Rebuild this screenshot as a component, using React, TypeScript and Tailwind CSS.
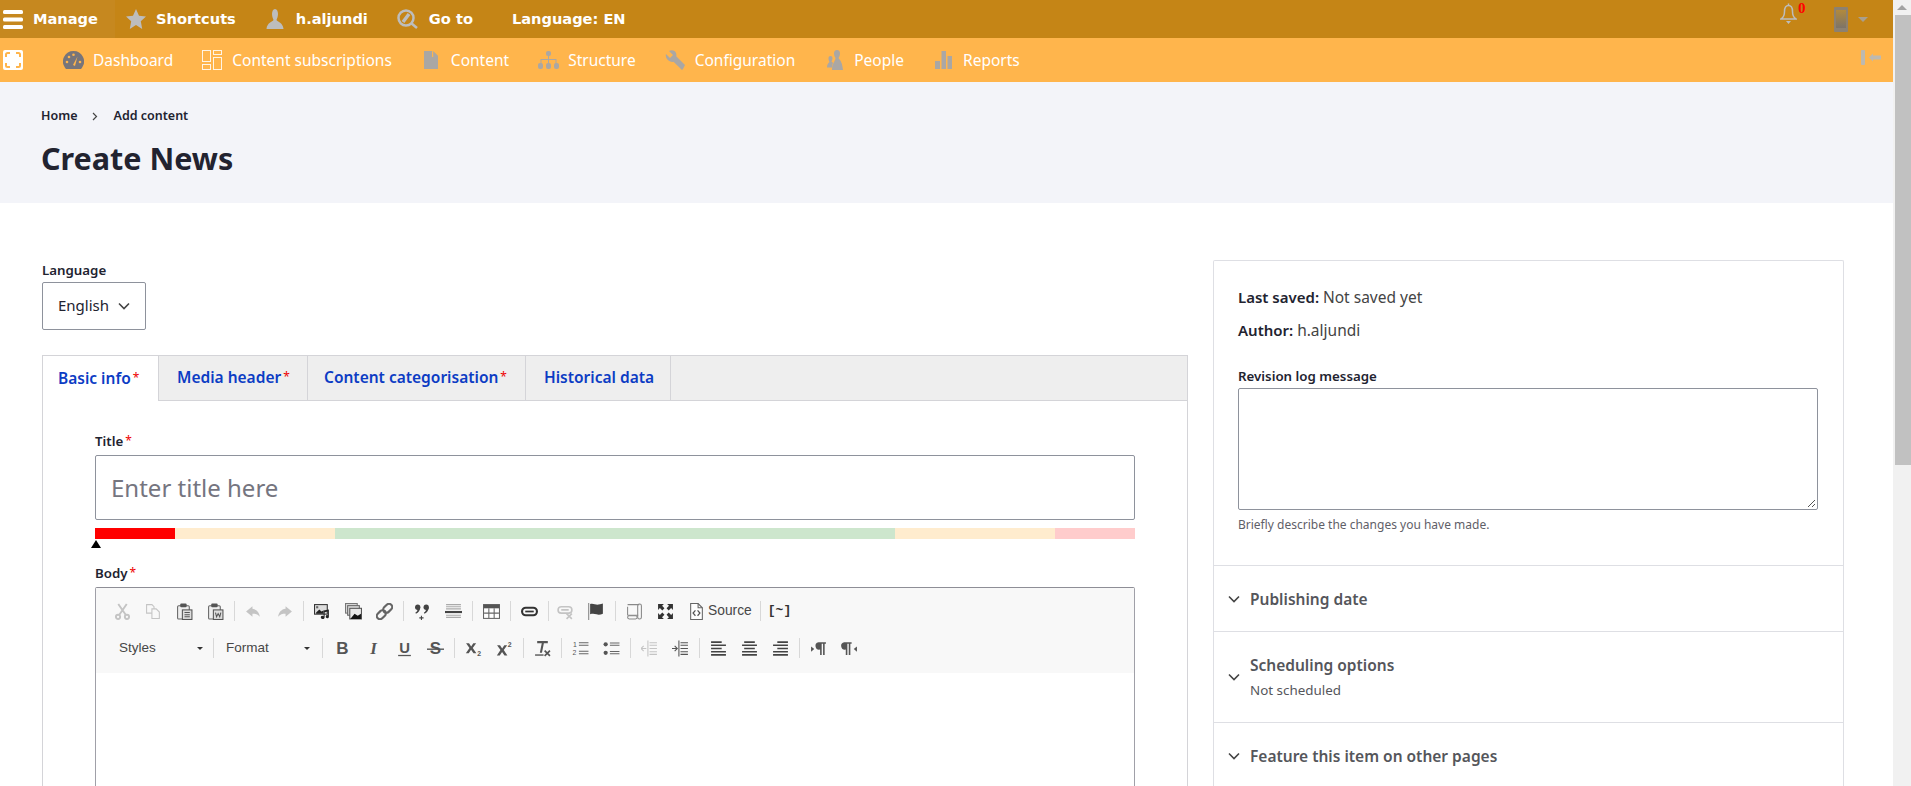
import React from 'react';

const gray = '#555';
const light = '#c4c4c4';

// CKEditor toolbar icons, hand drawn on a 16 box
const icons: Record<string, React.ReactNode> = {
  cut: (
    <g stroke={light} fill="none" strokeWidth="1.8">
      <path d="M4 1l7 10M12 1L5 11" />
      <circle cx="3.8" cy="13" r="2" />
      <circle cx="12.2" cy="13" r="2" />
    </g>
  ),
  copy: (
    <g stroke={light} fill="#f8f8f8" strokeWidth="1">
      <path d="M1.5 1.5h5l2 2v6h-7z" />
      <path d="M6.5 5.5h4l3 3v6h-7z" />
    </g>
  ),
  paste: (
    <g>
      <rect x="1.5" y="2.5" width="11" height="12.5" rx="1" fill="#eee" stroke="#666" />
      <rect x="4" y="0.5" width="6" height="3.5" rx="1" fill="#555" />
      <rect x="6" y="6.5" width="9" height="9" fill="#ddd" stroke="#555" />
      <path d="M8 9h5M8 11h5M8 13h5" stroke="#555" />
    </g>
  ),
  word: (
    <g>
      <rect x="1.5" y="2.5" width="11" height="12.5" rx="1" fill="#eee" stroke="#666" />
      <rect x="4" y="0.5" width="6" height="3.5" rx="1" fill="#555" />
      <rect x="6" y="6.5" width="9" height="9" fill="#ddd" stroke="#555" />
      <path d="M8 9l1 4 1.500-3 1.500 3 1-4" stroke="#555" fill="none" />
    </g>
  ),
  undo: <path d="M7 3L1 8l6 5v-3c3 0 5 .5 7 3-.5-4-3-7-7-7.500z" fill={light} />,
  redo: <path d="M9 3l6 5-6 5v-3c-3 0-5 .5-7 3 .5-4 3-7 7-7.500z" fill={light} />,
  image: (
    <g>
      <rect x="0.500" y="1.500" width="12" height="9" fill="#ddd" stroke="#333" />
      <path d="M2 9l3-3 2 2 2-1v3H2z" fill="#222" />
      <rect x="2" y="3" width="2" height="2" fill="#666" />
      <path d="M8 15a1.500 1.500 0 1 1 1-2.500V7l5-1v7a1.500 1.500 0 1 1-1-1.500V8l-3 .7V13.500A1.500 1.500 0 0 1 8 15z" fill="#222" />
    </g>
  ),
  gallery: (
    <g>
      <rect x="0.500" y="0.500" width="11" height="9" fill="#ddd" stroke="#777" />
      <rect x="2.500" y="2.500" width="11" height="9" fill="#ddd" stroke="#666" />
      <rect x="4.500" y="5" width="11" height="10" fill="#e8e8e8" stroke="#555" />
      <path d="M5 15l4-5 3 2 3-2v5z" fill="#111" />
    </g>
  ),
  chain: (
    <g fill="none" stroke="#666" strokeWidth="2" transform="rotate(-45 8 8)">
      <rect x="-1" y="5" width="9.500" height="6" rx="3" />
      <rect x="7.500" y="5" width="9.500" height="6" rx="3" />
    </g>
  ),
  quote: (
    <g fill="#444">
      <circle cx="3.500" cy="4" r="2.500" />
      <path d="M5.800 4c0 3-1.500 5-4 6l-.5-1c1.500-1 2-2 2-3z" />
      <circle cx="11.500" cy="4" r="2.500" />
      <path d="M13.800 4c0 3-1.500 5-4 6l-.5-1c1.500-1 2-2 2-3z" />
      <path d="M6.500 12h1v1.500h1.500v1H7.500V16h-1v-1.500H5v-1h1.500z" />
    </g>
  ),
  hr: (
    <g>
      <path d="M1 1.500h14M1 3.500h14M1 5.500h14M1 11.500h14M1 13.500h14" stroke="#aaa" />
      <rect x="0" y="7.500" width="16" height="2" fill="#444" />
    </g>
  ),
  table: (
    <g>
      <rect x="0.500" y="1.500" width="15" height="13" fill="#fff" stroke="#666" />
      <rect x="0.500" y="1.500" width="15" height="3.500" fill="#555" />
      <path d="M5.500 5v9M10.500 5v9M1 9.500h14" stroke="#666" />
    </g>
  ),
  link: (
    <g fill="none">
      <rect x="1" y="4.500" width="14" height="7" rx="3.500" stroke="#333" strokeWidth="2" />
      <path d="M4 8h8" stroke="#333" strokeWidth="1.600" />
    </g>
  ),
  unlink: (
    <g fill="none" stroke={light} strokeWidth="1.500">
      <rect x="1" y="3.500" width="13" height="6" rx="3" />
      <path d="M4 6.500h7M9 10l5 5M14 10l-5 5" />
    </g>
  ),
  flag: (
    <g fill="#444">
      <rect x="0" y="0" width="1.200" height="16" fill="#999" />
      <path d="M2 1c3-1 5 1 8 .5 2-.3 3-.5 4-1V10c-2 1-4 1.500-6 .7-2-.8-4-.8-6-.2z" />
    </g>
  ),
  book: (
    <g fill="none" stroke="#888">
      <path d="M1.500 1.500h11M1.500 3.500v8M1.500 11.500h10" />
      <rect x="1.500" y="12" width="9" height="3" rx="1.500" />
      <rect x="11" y="1" width="3.500" height="14" rx="1.700" />
    </g>
  ),
  full: (
    <g fill="#333">
      <path d="M1 1h5.500L4.800 2.700 7 5 5 7 2.700 4.800 1 6.500zM15 1v5.500l-1.700-1.700L11 7 9 5l2.300-2.300L9.500 1zM1 15V9.500l1.700 1.700L5 9l2 2-2.300 2.300L6.500 15zM15 15H9.500l1.700-1.700L9 11l2-2 2.300 2.300L15 9.500z" />
    </g>
  ),
  source: (
    <g>
      <path d="M2.500 .5h7l4 4v11h-11z" fill="#fff" stroke="#666" />
      <path d="M9.500 .5v4h4" fill="none" stroke="#666" />
      <path d="M7 7L4.800 9.500 7 12M9 7l2.200 2.500L9 12" fill="none" stroke="#555" strokeWidth="1.200" />
    </g>
  ),
  bold: <text x="8" y="13.500" textAnchor="middle" fontSize="16" fontWeight="700" fill={gray} fontFamily="Liberation Sans, sans-serif">B</text>,
  italic: <text x="8" y="13.500" textAnchor="middle" fontSize="16" fontWeight="700" fontStyle="italic" fill={gray} fontFamily="Liberation Serif, serif">I</text>,
  underline: (
    <g>
      <text x="8" y="12" textAnchor="middle" fontSize="14" fontWeight="700" fill={gray} fontFamily="Liberation Sans, sans-serif">U</text>
      <rect x="2" y="14" width="12" height="1.200" fill={gray} />
    </g>
  ),
  strike: (
    <g>
      <text x="8" y="13.500" textAnchor="middle" fontSize="16" fontWeight="700" fill={gray} fontFamily="Liberation Sans, sans-serif">S</text>
      <rect x="0" y="8" width="16" height="1.300" fill={gray} />
    </g>
  ),
  sub: (
    <g fill={gray}>
      <path d="M1 3h2.800l2 3 2-3H10.500L7.300 7.500l3.400 5H8L5.700 9.200 3.500 12.500H.8l3.400-5z" />
      <text x="11.500" y="15.500" fontSize="6.500" fontWeight="700" fontFamily="Liberation Sans, sans-serif">2</text>
    </g>
  ),
  sup: (
    <g fill={gray}>
      <path d="M1 5h2.800l2 3 2-3H10.500L7.300 9.500l3.400 5H8l-2.300-3.300-2.200 3.300H.8l3.400-5z" />
      <text x="11" y="6.500" fontSize="6.500" fontWeight="700" fontFamily="Liberation Sans, sans-serif">2</text>
    </g>
  ),
  clear: (
    <g fill={gray}>
      <path d="M3 1h10v2H9.300L7.500 12h-2L7.300 3H3z" />
      <rect x="1" y="13.500" width="8" height="1.300" />
      <path d="M10 10l5 5M15 10l-5 5" stroke={gray} strokeWidth="1.600" />
    </g>
  ),
  ol: (
    <g fill={gray}>
      <path d="M6.500 2.500h9M6.500 5h9M6.500 10.500h9M6.500 13h9" stroke="#666" />
      <text x="1" y="6.500" fontSize="6.500" fontFamily="Liberation Sans, sans-serif">1</text>
      <text x="0.500" y="14.500" fontSize="6.500" fontFamily="Liberation Sans, sans-serif">2</text>
    </g>
  ),
  ul: (
    <g fill={gray}>
      <circle cx="2.500" cy="4" r="2" />
      <circle cx="2.500" cy="12" r="2" />
      <path d="M6.500 2.800h9M6.500 5h9M6.500 10.800h9M6.500 13h9" stroke="#666" />
    </g>
  ),
  outdent: (
    <g fill="none" stroke={light}>
      <path d="M6.500 .5v15M8 2.500h7M8 5h7M8 8h7M8 11h7M8 13.500h7" />
      <path d="M0 8h5M2.500 5.500L0 8l2.500 2.500" />
    </g>
  ),
  indent: (
    <g fill="none" stroke="#555">
      <path d="M6.500 .5v15M8 2.500h7M8 5h7M8 8h7M8 11h7M8 13.500h7" />
      <path d="M0 8h5M2.500 5.500L5 8l-2.500 2.500" />
    </g>
  ),
  left: <path d="M1 2h10M1 5h14M1 8h10M1 11h14M1 14h14" stroke="#444" strokeWidth="1.500" />,
  center: <path d="M3 2h10M1 5h14M3 8h10M1 11h14M1 14h14" stroke="#444" strokeWidth="1.500" />,
  right: <path d="M5 2h10M1 5h14M5 8h10M1 11h14M1 14h14" stroke="#444" strokeWidth="1.500" />,
  ltr: (
    <g fill="#555">
      <path d="M1 6l3 2.500L1 11z" />
      <path d="M8 2h7v1.500h-1.200V14h-1.500V3.500H11V14H9.500V9A3.500 3.500 0 0 1 8 2z" />
    </g>
  ),
  rtl: (
    <g fill="#555">
      <path d="M3 2h7v1.500H8.800V14H7.300V3.500H6V14H4.500V9A3.500 3.500 0 0 1 3 2z" />
      <path d="M15 6l-3 2.500 3 2.500z" />
    </g>
  ),
};

const Btn = ({ name, className }: { name: string; className?: string }) => (
  <span className={`w-[31px] h-[20px] flex items-center justify-center shrink-0 ${className ?? ''}`}>
    <svg width="17" height="17" viewBox="0 0 16 16">{icons[name]}</svg>
  </span>
);

const Sep = () => (
  <span className="w-[7px] h-[20px] flex justify-center shrink-0">
    <span className="w-px h-full bg-[#d8d8d8]" />
  </span>
);

const Req = () => <span className="text-[#e00] text-[12px] font-normal ml-[2px] relative -top-[1px]">*</span>;

const TopItem = ({ icon, label, className }: { icon: React.ReactNode; label: string; className?: string }) => (
  <div className={`flex items-center h-full ${className ?? ''}`}>
    {icon}
    <span>{label}</span>
  </div>
);

const NavItem = ({ icon, label }: { icon: React.ReactNode; label: string }) => (
  <div className="flex items-center gap-[9px]">
    <span className="w-[21px] h-[22px] flex items-center justify-center">{icon}</span>
    <span className="text-[15.500px] text-white pt-[2px]">{label}</span>
  </div>
);

const Chevron = ({ className }: { className?: string }) => (
  <svg width="12" height="8" viewBox="0 0 12 8" className={className}>
    <path d="M1 1.500L6 6.500 11 1.500" fill="none" stroke="#444" strokeWidth="1.600" />
  </svg>
);

const Section = ({ title, sub }: { title: string; sub?: string }) => (
  <div className={`border-t border-[#dedfe4] flex items-center pl-[14px] ${sub ? 'h-[91px]' : 'h-[66px]'}`}>
    <Chevron className="shrink-0" />
    <div className="ml-[10px]">
      <div className="text-[15.500px] font-semibold text-[#55565b] leading-[20px]">{title}</div>
      {sub && <div className="text-[13.400px] text-[#55565b] mt-[5px] leading-[20px]">{sub}</div>}
    </div>
  </div>
);

export default function App() {
  return (
    <div className="flex h-[786px] w-full overflow-hidden bg-white text-[#222330] font-['Noto_Sans',sans-serif]">
      <div className="flex-1 min-w-0 flex flex-col">
        {/* admin toolbar */}
        <div className="h-[38px] bg-[#c58516] flex items-center text-white text-[14.600px] font-bold shrink-0 relative font-['DejaVu_Sans',sans-serif]">
          <TopItem
            className="w-[115px] shrink-0 bg-[#c6881f] pl-[3px]"
            label="Manage"
            icon={
              <svg width="20" height="19" viewBox="0 0 20 19" className="mr-[10px] shrink-0">
                <rect width="20" height="4" rx="1.500" y="0" fill="#fff" />
                <rect width="20" height="4" rx="1.500" y="7.500" fill="#fff" />
                <rect width="20" height="4" rx="1.500" y="15" fill="#fff" />
              </svg>
            }
          />
          <TopItem
            className="pl-[11px]"
            label="Shortcuts"
            icon={
              <svg width="20" height="20" viewBox="0 0 20 20" className="mr-[10px]">
                <path d="M10 0l3 6.700 7 .8-5.200 4.800L16.200 20 10 16l-6.200 4 1.400-7.700L0 7.500l7-.8z" fill="#bdbdbd" />
              </svg>
            }
          />
          <TopItem
            className="pl-[29px]"
            label="h.aljundi"
            icon={
              <svg width="20" height="20" viewBox="0 0 20 20" className="mr-[11px]">
                <path d="M10 0c2 0 3 2.500 3 5 0 2.500-1 4.500-1.500 6 1 2 6.500 2.500 7 9h-17c.5-6.500 6-7 7-9C8 9.500 7 7.500 7 5c0-2.500 1-5 3-5z" fill="#bdbdbd" />
              </svg>
            }
          />
          <TopItem
            className="pl-[29px]"
            label="Go to"
            icon={
              <svg width="21" height="20" viewBox="0 0 21 20" className="mr-[11px]">
                <circle cx="9" cy="9" r="7.500" fill="none" stroke="#bdbdbd" strokeWidth="2.500" />
                <path d="M6 13L12 5" stroke="#bdbdbd" strokeWidth="3.500" />
                <path d="M14 14l6 5" stroke="#bdbdbd" strokeWidth="2.500" />
              </svg>
            }
          />
          <span className="ml-[39px]">Language: EN</span>
          <div className="ml-auto flex items-center h-full">
            <div className="relative w-[28px] h-full">
              <svg width="17" height="21" viewBox="0 0 17 21" className="absolute left-0 top-[3px]">
                <path d="M8.500 0.500v2M8.500 2.500c-3.500 0-4 3-4 6 0 3-1 6-3.500 7.500h15c-2.500-1.500-3.500-4.500-3.500-7.500 0-3-.5-6-4-6z" fill="none" stroke="#bdbdbd" strokeWidth="1.500" />
                <path d="M6 18h5l-2.500 3z" fill="#bdbdbd" />
              </svg>
              <span className="absolute left-[18px] top-[0px] text-[15px] leading-[17px] text-[#ff0000] font-bold font-['Liberation_Serif',serif]">0</span>
            </div>
            <svg width="14" height="25" viewBox="0 0 14 25" className="ml-[26px]">
              <defs>
                <linearGradient id="phone" x1="0" y1="0" x2="0" y2="1">
                  <stop offset="0" stopColor="#b28a3c" />
                  <stop offset="1" stopColor="#7d7468" />
                </linearGradient>
              </defs>
              <rect x="0" y="0" width="14" height="25" rx="1" fill="#8d8170" />
              <rect x="2" y="3" width="10" height="18" fill="url(#phone)" />
            </svg>
            <svg width="10" height="5" viewBox="0 0 10 5" className="ml-[10px] mr-[25px]">
              <path d="M0 0h10L5 5z" fill="#a99f8e" />
            </svg>
          </div>
        </div>

        {/* admin menu */}
        <div className="h-[44px] bg-[#ffb54c] flex items-center shrink-0">
          <svg width="20" height="20" viewBox="0 0 20 20" className="ml-[3px]">
            <rect width="20" height="20" rx="2" fill="#fff" />
            <path d="M3 7V4.500A1.500 1.500 0 0 1 4.500 3H7M13 3h2.500A1.500 1.500 0 0 1 17 4.500V7M17 13v2.500a1.500 1.500 0 0 1-1.500 1.500H13M7 17H4.500A1.500 1.500 0 0 1 3 15.500V13" fill="none" stroke="#ffb54c" strokeWidth="2" />
          </svg>
          <div className="flex items-center gap-[29px] ml-[40px]">
            <NavItem
              label="Dashboard"
              icon={
                <svg width="21" height="18" viewBox="0 0 21 18">
                  <path d="M10.500 0a10.500 10.500 0 0 1 8.500 16.700l-1 1.300H3l-1-1.300A10.500 10.500 0 0 1 10.500 0z" fill="#77757a" />
                  <circle cx="4" cy="11" r="1.300" fill="#ffb54c" />
                  <circle cx="6" cy="6" r="1.300" fill="#ffb54c" />
                  <circle cx="10.500" cy="3.800" r="1.300" fill="#ffb54c" />
                  <circle cx="17" cy="11" r="1.300" fill="#ffb54c" />
                  <path d="M10 14L14.500 5.500 12 15z" fill="#ffb54c" />
                </svg>
              }
            />
            <NavItem
              label="Content subscriptions"
              icon={
                <svg width="21" height="20" viewBox="0 0 21 20" fill="none" stroke="#fff" strokeWidth="1" opacity="0.85">
                  <rect x="0.500" y="0.500" width="8" height="11" />
                  <rect x="11.500" y="0.500" width="8" height="4" />
                  <rect x="0.500" y="14.500" width="8" height="5" />
                  <rect x="11.500" y="7.500" width="8" height="12" />
                </svg>
              }
            />
            <NavItem
              label="Content"
              icon={
                <svg width="14" height="18" viewBox="0 0 14 18">
                  <path d="M0 0h8l6 6v12H0z" fill="#aaa7a4" />
                  <path d="M8 0v6h6z" fill="#ffb54c" />
                  <path d="M9.200 0L14 4.800V6H9.200z" fill="#aaa7a4" />
                </svg>
              }
            />
            <NavItem
              label="Structure"
              icon={
                <svg width="21" height="18" viewBox="0 0 21 18" fill="#aaa7a4">
                  <rect x="8" y="0" width="5" height="5" rx="2" />
                  <rect x="0" y="12" width="5" height="6" rx="2" />
                  <rect x="8" y="12" width="5" height="6" rx="2" />
                  <rect x="16" y="12" width="5" height="6" rx="2" />
                  <path d="M10 4h1v4h7.500v5h-1V9H11v4h-1V9H3.500v4h-1V8H10z" />
                </svg>
              }
            />
            <NavItem
              label="Configuration"
              icon={
                <svg width="20" height="20" viewBox="0 0 20 20">
                  <path d="M1 4l4 4 3-3-4-4c3-1.500 6-.5 7 2 .5 1.200.5 2.300.2 3.300L20 15l-2 4-1 1-8.500-8.200c-1 .3-2.200.3-3.300-.2C2.500 10.500 0 7.500 1 4z" fill="#aaa7a4" />
                </svg>
              }
            />
            <NavItem
              label="People"
              icon={
                <svg width="16" height="20" viewBox="0 0 16 20" fill="#aaa7a4">
                  <path d="M10 0c2 0 3 1.500 3 3.500S12 7 11.500 8c.5 1.500 3.500 2 4.500 12H5c0-7 3-8 3.500-12C8 7 7 5.500 7 3.500S8 0 10 0z" />
                  <path d="M3.500 6c1.500 0 2 1 2 2.500 0 1-.5 2-1 3 .5.500 1 1 1.500 1.300-.5 1.500-1 3-1 4.700H0c0-3 1-4 2.500-5.500C2 11 1.500 10 1.500 8.500 1.500 7 2 6 3.500 6z" />
                </svg>
              }
            />
            <NavItem
              label="Reports"
              icon={
                <svg width="17" height="18" viewBox="0 0 17 18" fill="#aaa7a4">
                  <rect x="0" y="10" width="5" height="8" />
                  <rect x="6.500" y="0" width="4.500" height="18" />
                  <rect x="12.500" y="5" width="4.500" height="13" />
                </svg>
              }
            />
          </div>
          <svg width="20" height="15" viewBox="0 0 20 15" className="ml-auto mr-[12px] -mt-[6px]">
            <rect x="0" y="0" width="4" height="15" rx="1" fill="#bdb9b0" />
            <path d="M8 7.500L12 3.500v2h8v4h-8v2z" fill="#bdb9b0" />
          </svg>
        </div>

        {/* page title */}
        <div className="h-[121px] bg-[#f3f4f9] pl-[41px] pt-[25px] shrink-0">
          <div className="flex items-center text-[12.500px] font-semibold leading-[18px] text-[#222330]">
            <span>Home</span>
            <svg width="6" height="9" viewBox="0 0 6 9" className="mx-[15px]">
              <path d="M1 1l3.500 3.500L1 8" fill="none" stroke="#444" strokeWidth="1.200" />
            </svg>
            <span>Add content</span>
          </div>
          <h1 className="text-[30.500px] font-bold leading-[40px] mt-[13px] text-[#222330]">Create News</h1>
        </div>

        <div className="flex-1 min-h-0 overflow-hidden flex pl-[42px] pr-[49px] gap-[25px]">
          {/* main column */}
          <div className="w-[1146px] shrink-0 pt-[60px] flex flex-col">
            <div className="text-[13.300px] font-semibold leading-[15px] shrink-0">Language</div>
            <div className="mt-[4px] w-[104px] h-[48px] shrink-0 border border-[#8e929c] rounded-[2px] flex items-center pl-[15px] pb-[1px] gap-[9px] text-[15px] text-[#222330]">
              English
              <Chevron />
            </div>
            <div className="mt-[25px] flex-1 shrink-0 border-x border-t border-[#d4d4d8]">
              <div className="h-[45px] flex bg-[#eeeeee] border-b border-[#d4d4d8] text-[15.500px] font-semibold text-[#0c3cc4]">
                <div className="w-[116px] bg-white -mb-px pl-[15px] flex items-center border-r border-[#d4d4d8]">
                  Basic info
                  <Req />
                </div>
                <div className="w-[149px] pl-[18px] flex items-center border-r border-[#d4d4d8]">
                  Media header
                  <Req />
                </div>
                <div className="w-[218px] pl-[16px] flex items-center border-r border-[#d4d4d8]">
                  Content categorisation
                  <Req />
                </div>
                <div className="w-[145px] pl-[18px] flex items-center border-r border-[#d4d4d8]">Historical data</div>
              </div>
              <div className="pl-[52px] pr-[52px] pt-[33px]">
                <div className="text-[13.300px] font-semibold leading-[15px]">
                  Title
                  <Req />
                </div>
                <div className="mt-[6px] h-[65px] border border-[#8e929c] rounded-[2px] flex items-center pl-[15px] text-[24px] text-[#75757f]">
                  Enter title here
                </div>
                <div className="flex h-[11px] mt-[8px]">
                  <div className="w-[80px] bg-[#ff0000]" />
                  <div className="w-[160px] bg-[#ffecce]" />
                  <div className="w-[560px] bg-[#cde6cd]" />
                  <div className="w-[160px] bg-[#ffecce]" />
                  <div className="w-[80px] bg-[#ffcccc]" />
                </div>
                <svg width="10" height="8" viewBox="0 0 10 8" className="block mt-[1px] -ml-[4px]">
                  <path d="M5 0l5 8H0z" fill="#000" />
                </svg>
                <div className="mt-[18px] text-[13.300px] font-semibold leading-[15px]">
                  Body
                  <Req />
                </div>
                <div className="mt-[6px] h-[220px] border-x border-t border-[#a0a0a8] border-t-[#8e8e96] rounded-t-[2px]">
                  <div className="h-[85px] bg-[#f8f8f8] pl-[11px] pt-[13px] font-['Liberation_Sans',sans-serif]">
                    <div className="flex items-center h-[20px]">
                      <Btn name="cut" />
                      <Btn name="copy" />
                      <Btn name="paste" />
                      <Btn name="word" />
                      <Sep />
                      <Btn name="undo" />
                      <Btn name="redo" />
                      <Sep />
                      <Btn name="image" />
                      <Btn name="gallery" />
                      <Btn name="chain" />
                      <Sep />
                      <Btn name="quote" />
                      <Btn name="hr" />
                      <Sep />
                      <Btn name="table" />
                      <Sep />
                      <Btn name="link" />
                      <Sep />
                      <Btn name="unlink" className="-ml-[2px]" />
                      <Btn name="flag" />
                      <Sep />
                      <Btn name="book" />
                      <Btn name="full" />
                      <Btn name="source" />
                      <span className="-ml-[4px] text-[13.800px] text-[#474747] w-[49px]">Source</span>
                      <Sep />
                      <span className="w-[31px] text-center text-[13px] font-bold text-[#333] font-['Liberation_Mono',monospace]">[~]</span>
                    </div>
                    <div className="flex items-center h-[20px] mt-[17px] ml-[6px]">
                      <span className="w-[97px] pl-[6px] flex items-center text-[13.500px] text-[#474747]">
                        Styles
                        <span className="ml-auto mr-[7px] border-x-[3px] border-t-[3px] border-x-transparent border-t-[#333]" />
                      </span>
                      <Sep />
                      <span className="w-[102px] pl-[9px] flex items-center text-[13.500px] text-[#474747]">
                        Format
                        <span className="ml-auto mr-[9px] border-x-[3px] border-t-[3px] border-x-transparent border-t-[#333]" />
                      </span>
                      <Sep />
                      <Btn name="bold" className="ml-[1px]" />
                      <Btn name="italic" />
                      <Btn name="underline" />
                      <Btn name="strike" />
                      <Sep />
                      <Btn name="sub" />
                      <Btn name="sup" />
                      <Sep />
                      <Btn name="clear" />
                      <Sep />
                      <Btn name="ol" />
                      <Btn name="ul" />
                      <Sep />
                      <Btn name="outdent" />
                      <Btn name="indent" />
                      <Sep />
                      <Btn name="left" />
                      <Btn name="center" />
                      <Btn name="right" />
                      <Sep />
                      <Btn name="ltr" />
                      <Btn name="rtl" />
                    </div>
                  </div>
                </div>
              </div>
            </div>
          </div>

          {/* sidebar */}
          <div className="flex-1 min-w-0 mt-[57px] border-x border-t border-[#dedfe4] rounded-t-[2px]">
            <div className="h-[304px] pl-[24px] pr-[25px] pt-[26px]">
              <p className="text-[15px] leading-[20px]">
                <span className="font-semibold">Last saved:</span> <span className="text-[#444] text-[15.500px]">Not saved yet</span>
              </p>
              <p className="text-[15px] leading-[20px] mt-[13px]">
                <span className="font-semibold">Author:</span> <span className="text-[#444] text-[15.500px]">h.aljundi</span>
              </p>
              <div className="text-[13.300px] font-semibold leading-[15px] mt-[29px]">Revision log message</div>
              <div className="relative mt-[4px] h-[122px] border border-[#8e929c] rounded-[2px]">
                <svg width="9" height="9" viewBox="0 0 9 9" className="absolute right-[1px] bottom-[1px]">
                  <path d="M1 8L8 1M5 8l3-3" stroke="#555" strokeWidth="1" />
                </svg>
              </div>
              <div className="text-[12px] text-[#5f6068] mt-[6px] leading-[18px]">Briefly describe the changes you have made.</div>
            </div>
            <Section title="Publishing date" />
            <Section title="Scheduling options" sub="Not scheduled" />
            <Section title="Feature this item on other pages" />
          </div>
        </div>
      </div>

      {/* browser scrollbar */}
      <div className="w-[18px] shrink-0 bg-[#f1f1f1] flex flex-col items-stretch">
        <div className="h-[15px] flex items-center justify-center">
          <span className="border-x-[5px] border-b-[5px] border-x-transparent border-b-[#a3a3a3]" />
        </div>
        <div className="h-[450px] bg-[#c1c1c1] ml-[2px]" />
      </div>
    </div>
  );
}
